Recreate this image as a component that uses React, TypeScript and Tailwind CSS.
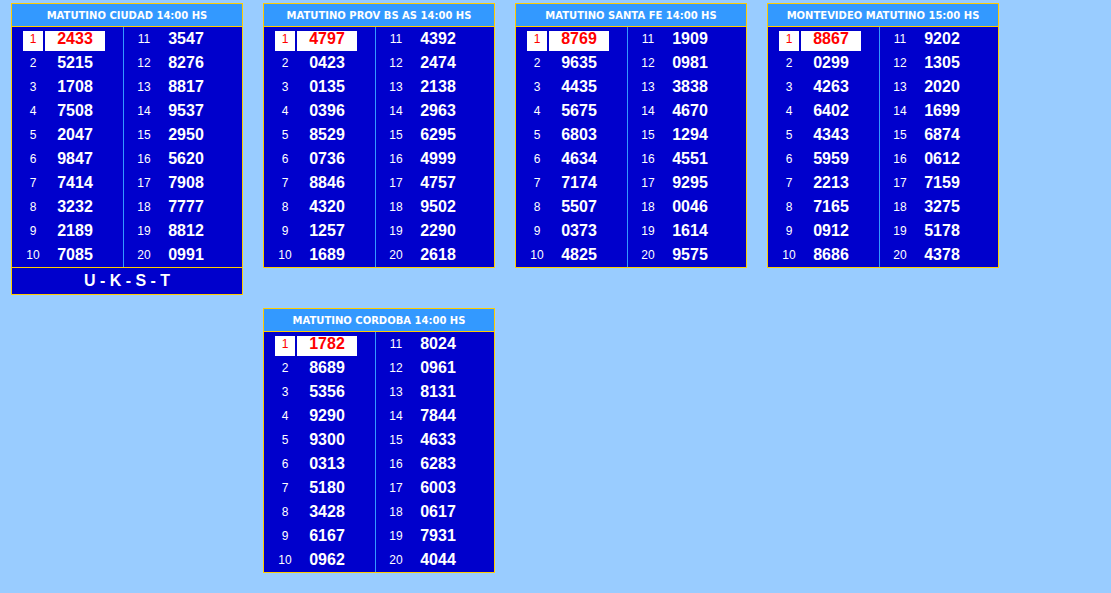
import React from "react"

interface Board {
    title: string
    numbers: string[]
    footer?: string
}

const boards: Board[] = [
    {
        title: "MATUTINO CIUDAD 14:00 HS",
        numbers: ["2433", "5215", "1708", "7508", "2047", "9847", "7414", "3232", "2189", "7085", "3547", "8276", "8817", "9537", "2950", "5620", "7908", "7777", "8812", "0991"],
        footer: "U - K - S - T",
    },
    {
        title: "MATUTINO PROV BS AS 14:00 HS",
        numbers: ["4797", "0423", "0135", "0396", "8529", "0736", "8846", "4320", "1257", "1689", "4392", "2474", "2138", "2963", "6295", "4999", "4757", "9502", "2290", "2618"],
    },
    {
        title: "MATUTINO SANTA FE 14:00 HS",
        numbers: ["8769", "9635", "4435", "5675", "6803", "4634", "7174", "5507", "0373", "4825", "1909", "0981", "3838", "4670", "1294", "4551", "9295", "0046", "1614", "9575"],
    },
    {
        title: "MONTEVIDEO MATUTINO 15:00 HS",
        numbers: ["8867", "0299", "4263", "6402", "4343", "5959", "2213", "7165", "0912", "8686", "9202", "1305", "2020", "1699", "6874", "0612", "7159", "3275", "5178", "4378"],
    },
]

const cordoba: Board = {
    title: "MATUTINO CORDOBA 14:00 HS",
    numbers: ["1782", "8689", "5356", "9290", "9300", "0313", "5180", "3428", "6167", "0962", "8024", "0961", "8131", "7844", "4633", "6283", "6003", "0617", "7931", "4044"],
}

function Row({ pos, value }: { pos: number; value: string }) {
    if (pos === 1) {
        return (
            <div className="h-[24px] flex gap-[2px]">
                <div className="mt-[4px] h-[20px] w-[20px] bg-white text-center text-[12px] leading-[16px] text-[#ff0000]">{pos}</div>
                <div className="mt-[4px] h-[20px] w-[60px] bg-white text-center text-[16px] leading-[16px] font-bold text-[#ff0000]">{value}</div>
            </div>
        )
    }
    return (
        <div className="h-[24px] flex items-center gap-[2px]">
            <div className="w-[20px] text-center text-[12px] text-white">{pos}</div>
            <div className="w-[60px] text-center text-[16px] font-bold text-white">{value}</div>
        </div>
    )
}

function BoardCard({ board, className }: { board: Board; className?: string }) {
    const left = board.numbers.slice(0, 10)
    const right = board.numbers.slice(10)
    return (
        <div className={`border border-[#ffcc00] bg-[#0000cc] ${className ?? ""}`}>
            <div className="h-[23px] border-b border-[#ffcc00] bg-[#3399ff] flex items-center justify-center text-white text-[10px] font-bold font-['DejaVu_Sans',sans-serif]">
                {board.title}
            </div>
            <div className="flex font-['Liberation_Sans',Arial,sans-serif]">
                <div className="w-[111px] pl-[11px]">
                    {left.map((n, i) => (
                        <Row key={i} pos={i + 1} value={n} />
                    ))}
                </div>
                <div className="w-px bg-[#3399ff]" />
                <div className="flex-1 pl-[10px]">
                    {right.map((n, i) => (
                        <Row key={i} pos={i + 11} value={n} />
                    ))}
                </div>
            </div>
            {board.footer && (
                <div className="h-[27px] border-t border-[#ffcc00] flex items-center justify-center text-white text-[16px] font-bold font-['Liberation_Sans',Arial,sans-serif]">
                    {board.footer}
                </div>
            )}
        </div>
    )
}

export default function App() {
    return (
        <div className="min-h-screen bg-[#99ccff] pt-[3px] pl-[11px]">
            <div className="grid grid-cols-[repeat(4,232px)] gap-x-[20px] gap-y-[13px] items-start">
                {boards.map((b) => (
                    <BoardCard key={b.title} board={b} />
                ))}
                <BoardCard board={cordoba} className="col-start-2" />
            </div>
        </div>
    )
}
